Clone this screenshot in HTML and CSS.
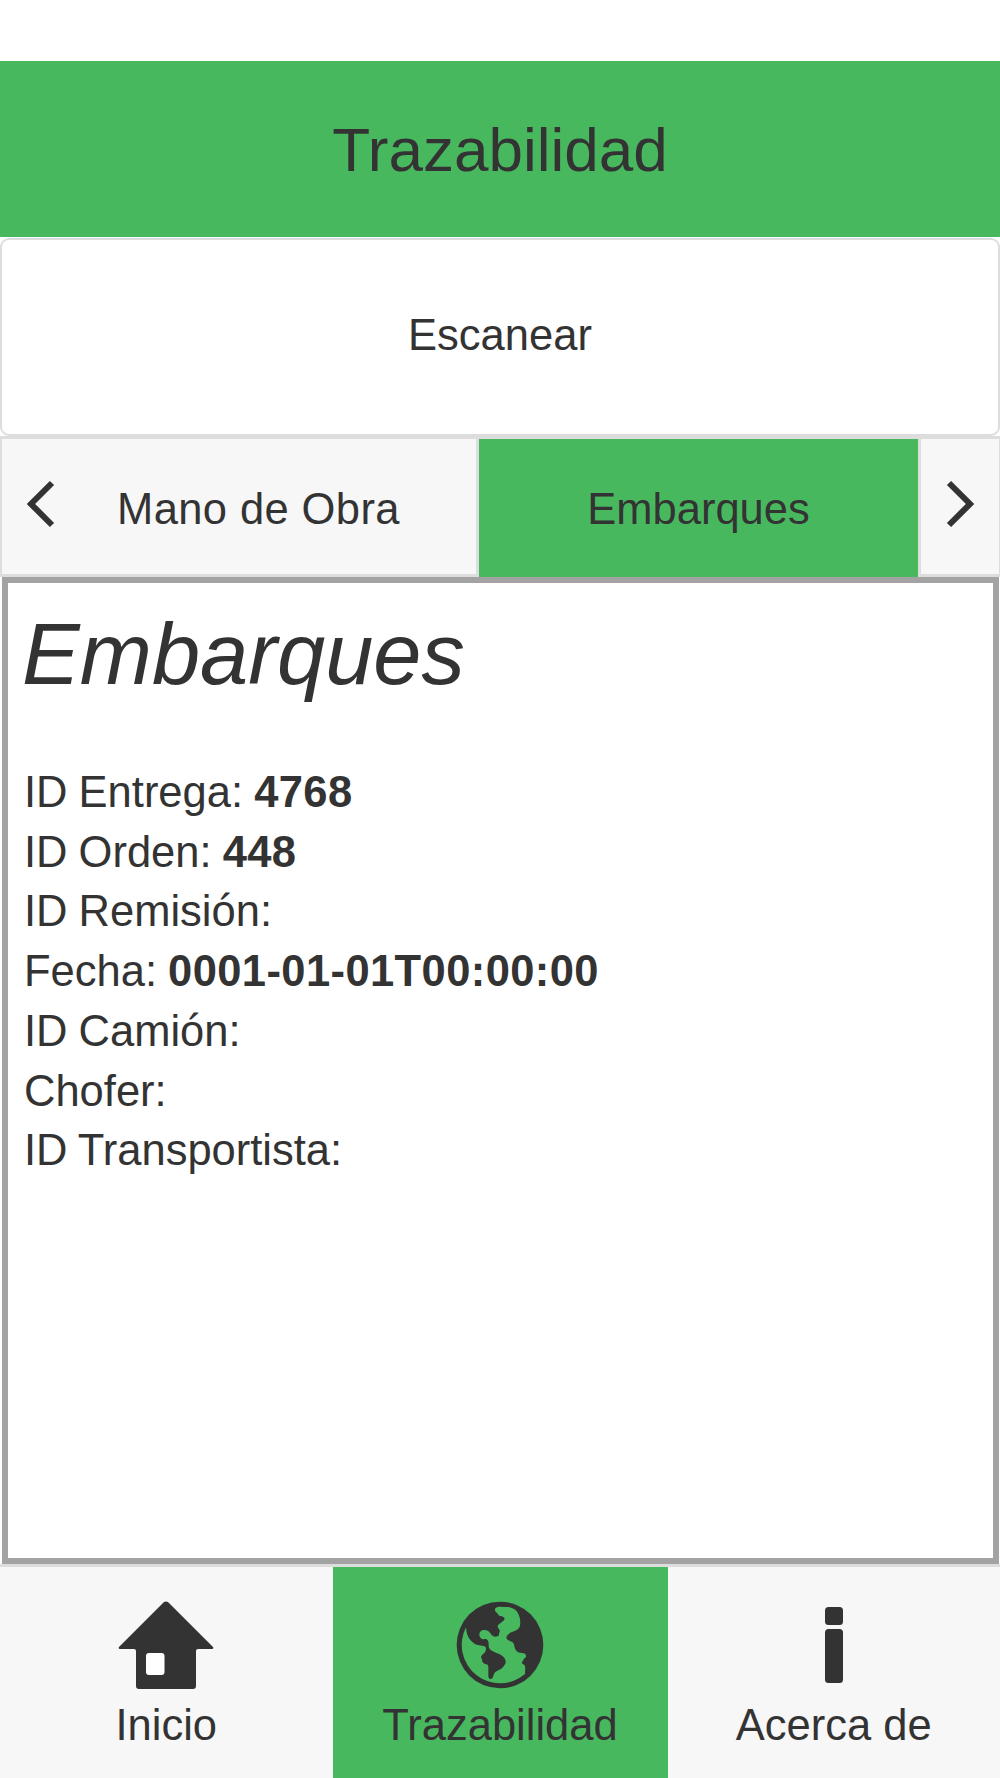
FILE: index.html
```
<!DOCTYPE html>
<html lang="es">
<head>
  <meta charset="UTF-8" />
  <meta name="viewport" content="width=device-width, initial-scale=1.0"/>
  <title>Trazabilidad</title>
  <link rel="stylesheet" href="styles.css">
</head>
<body>
  <header>
    <h1>Trazabilidad</h1>
  </header>

  <button class="scan-btn">Escanear</button>

  <nav class="tabs">
    <a class="tab tab-prev">
      <svg class="arrow" viewBox="0 0 28 48"><path d="M25 3L4 24l21 21"/></svg>
      <span>Mano de Obra</span>
    </a>
    <a class="tab active"><span>Embarques</span></a>
    <a class="tab tab-next">
      <svg class="arrow" viewBox="0 0 28 48"><path d="M3 3l21 21L3 45"/></svg>
    </a>
  </nav>

  <main class="content">
    <h2>Embarques</h2>
    <p>ID Entrega: <strong>4768</strong></p>
    <p>ID Orden: <strong>448</strong></p>
    <p>ID Remisión:</p>
    <p>Fecha: <strong>0001-01-01T00:00:00</strong></p>
    <p>ID Camión:</p>
    <p>Chofer:</p>
    <p>ID Transportista:</p>
  </main>

  <footer>
    <a class="foot-item">
      <svg class="icon" viewBox="0 0 96 88">
        <path d="M45.500 1.500Q48 -.5 50.500 1.500L95 46Q96 48 94 48H80Q78 48 78 50V85Q78 88 75 88H21Q18 88 18 85V50Q18 48 16 48H2Q0 48 1 46Z"/>
        <rect class="window" x="28" y="52" width="18.500" height="22" rx="3"/>
      </svg>
      <span>Inicio</span>
    </a>
    <a class="foot-item active">
      <svg class="icon" viewBox="398 183 288 264">
        <circle cx="542" cy="315" r="130"/>
        <path class="sea" d="M440 262C441 276 444 288 450 296C458 306 465 312 475 315C487 318 500 317 500 325C500 334 497 338 491 343C485 348 484 351 487 356C490 360 487 366 493 370C501 374 507 373 507 380V407C507 412 509 417 514 417C520 417 521 411 523 404C525 395 532 393 540 389C549 386 552 379 558 371C561 364 557 355 552 350C543 342 533 340 525 336C513 331 507 325 508 314C509 304 504 296 497 297C488 299 480 293 480 284C480 275 487 270 495 270C504 270 510 275 513 280C518 289 526 292 534 289C541 287 538 280 541 275C544 270 534 264 535 259C536 252 548 248 554 240C560 232 548 229 543 228C537 228 535 219 530 217C526 213 526 207 529 204C536 198 550 201 560 201C577 201 590 208 596 220C603 233 604 249 602 257C600 266 590 272 580 275C568 279 562 287 561 293C562 301 574 302 580 307C586 312 584 321 588 328C592 337 600 339 608 339C616 339 620 343 620 348C620 355 610 356 612 362C604 366 608 372 614 374C620 378 617 389 617 402A115 115 0 0 1 440 262Z"/>
      </svg>
      <span>Trazabilidad</span>
    </a>
    <a class="foot-item">
      <svg class="icon" viewBox="0 0 96 88">
        <rect x="39" y="6" width="18" height="18" rx="3.500"/>
        <rect x="39" y="28" width="18" height="54" rx="3.500"/>
      </svg>
      <span>Acerca de</span>
    </a>
  </footer>
</body>
</html>
```

FILE: styles.css
```
* {
  box-sizing: border-box;
}

body {
  display: flex;
  flex-direction: column;
  height: 1778px;
  margin: 0;
  padding-top: 61px;
  font-family: 'Helvetica Neue', 'Liberation Sans', Arial, sans-serif;
  font-size: 43.5px;
  line-height: 59.7px;
  color: #333;
  background-color: #fff;
}

header {
  height: 176px;
  background-color: #48b85f;
  text-align: center;
}

header h1 {
  margin: 0;
  padding-top: 1px;
  font-size: 62px;
  font-weight: normal;
  line-height: 176px;
}

.scan-btn {
  height: 198px;
  margin-top: 1px;
  padding: 0 0 3px;
  border: 2.67px solid #ddd;
  border-radius: 9px;
  background-color: #fff;
  color: #333;
  font: inherit;
}

.tabs {
  display: flex;
  height: 141px;
  border-top: 3px solid #ddd;
  border-left: 2px solid #ddd;
  border-right: 1px solid #ddd;
}

.tab {
  display: flex;
  align-items: center;
  background-color: #f7f7f7;
  border-bottom: 3px solid #ddd;
}

.tab.active {
  flex: 1;
  justify-content: center;
  padding-top: 3px;
  border-bottom: none;
  background-color: #48b85f;
}

.tab-prev {
  width: 477px;
  padding-left: 25px;
  border-right: 3px solid #ddd;
}

.tab-prev span {
  margin-left: 62px;
  padding-top: 7px;
  letter-spacing: 0.4px;
}

.tab-next {
  width: 81px;
  padding-left: 25px;
  border-left: 3px solid #ddd;
}

.arrow {
  width: 28px;
  height: 48px;
  margin-bottom: 5px;
  fill: none;
  stroke: #333;
  stroke-width: 6;
}

.content {
  height: 987px;
  margin: 0 1px 0 2px;
  padding: 11px 16px;
  border: 6px solid #a3a3a3;
}

.content h2 {
  margin: 0 0 49px -2px;
  font-size: 86.6px;
  font-style: italic;
  font-weight: normal;
  line-height: 120px;
}

.content p {
  margin: 0;
  word-spacing: -1px;
}

.content strong {
  letter-spacing: 0.4px;
}

footer {
  display: flex;
  flex: 1;
  border-top: 3px solid #ddd;
}

.foot-item {
  display: flex;
  flex-direction: column;
  align-items: center;
  width: 332.5px;
  padding-top: 34px;
  background-color: #f7f7f7;
}

.foot-item.active {
  width: 335px;
  background-color: #48b85f;
}

.icon {
  width: 96px;
  height: 88px;
  margin-bottom: 7px;
  fill: #333;
}

.icon .window {
  fill: #fff;
}

.icon .sea {
  fill: #48b85f;
}
```
